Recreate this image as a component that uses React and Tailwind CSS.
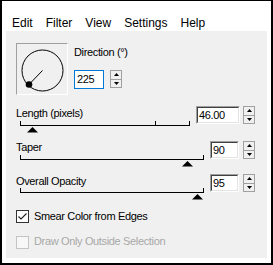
import React from 'react';

const font = { fontFamily: '"Liberation Sans", Arial, sans-serif' };

const Spin = () => (
  <div className="flex flex-col w-[12px] h-[18px] border border-[#a0a0a0] bg-[#f0f0f0]">
    <div className="flex-1 flex items-center justify-center border-b border-[#a0a0a0]">
      <svg width="5" height="3" viewBox="0 0 5 3"><polygon points="2.5,0 5,3 0,3" fill="#000" /></svg>
    </div>
    <div className="flex-1 flex items-center justify-center">
      <svg width="5" height="3" viewBox="0 0 5 3"><polygon points="0,0 5,0 2.5,3" fill="#000" /></svg>
    </div>
  </div>
);

const SunkenInput = ({ value, width }) => (
  <div className={`${width} h-[18px] border border-t-[#a0a0a0] border-l-[#a0a0a0] border-r-white border-b-white`}>
    <div className="h-full border border-t-[#404040] border-l-[#404040] border-r-[#e3e3e3] border-b-[#e3e3e3] bg-white flex items-center pl-[1px] text-[11px] leading-[13px]">
      {value}
    </div>
  </div>
);

const Track = ({ width, ticks, thumb }) => (
  <div className="relative h-[12px]" style={{ width }}>
    {ticks.map((t) => (
      <div key={t} className="absolute top-0 w-[1px] h-[4px] bg-black" style={{ left: t }} />
    ))}
    <div className="absolute top-[4px] left-0 right-0 h-[1px] bg-black" />
    <svg className="absolute top-[6px]" width="11" height="6" viewBox="0 0 11 6" style={{ left: thumb - 5 }}>
      <polygon points="5.5,0 11,5.5 0,5.5" fill="#000" />
    </svg>
  </div>
);

const Dial = () => (
  <div className="w-[52px] h-[52px] border border-t-[#a0a0a0] border-l-[#a0a0a0] border-r-white border-b-white">
    <svg width="50" height="50" viewBox="0 0 50 50">
      <circle cx="25.5" cy="26.5" r="20.5" fill="none" stroke="#000" strokeWidth="1" />
      <line x1="25.5" y1="26.5" x2="12" y2="40.5" stroke="#000" strokeWidth="1" />
      <circle cx="12" cy="40.5" r="3.3" fill="#000" />
    </svg>
  </div>
);

export default function App() {
  const menu = ['Edit', 'Filter', 'View', 'Settings', 'Help'];
  return (
    <div
      className="w-[273px] h-[265px] bg-white border-black border-t border-l-2 border-r-2 border-b-2 flex flex-col text-black"
      style={font}
    >
      <div className="h-[30px] shrink-0 pl-[10px] pt-[15px] flex gap-[13px] text-[12px] leading-[14px]">
        {menu.map((m) => (
          <span key={m}>{m}</span>
        ))}
      </div>

      <div className="mx-[4px] h-[227px] shrink-0 bg-[#f0f0f0] flex flex-col text-[11px] leading-[13px] tracking-[-0.35px]">
        <div className="flex mt-[12px] pl-[10px]">
          <Dial />
          <div className="ml-[6px] flex flex-col">
            <span className="mt-[3px]">Direction (°)</span>
            <div className="flex mt-[11px] gap-[6px]">
              <div className="w-[30px] h-[19px] border border-[#0078d7] bg-white flex items-center pl-[2px]">225</div>
              <Spin />
            </div>
          </div>
        </div>

        <div className="flex mt-[11px]">
          <div className="w-[190px] pl-[10px] flex flex-col">
            <span className="mt-[1px]">Length (pixels)</span>
            <div className="mt-[1px] ml-[4px]">
              <Track width={170} ticks={[0, 135, 169]} thumb={12} />
            </div>
          </div>
          <div className="flex gap-[3px]">
            <SunkenInput value="46.00" width="w-[44px]" />
            <Spin />
          </div>
        </div>

        <div className="flex mt-[8px]">
          <div className="w-[204px] pl-[10px] flex flex-col">
            <span>Taper</span>
            <div className="mt-[1px] ml-[4px]">
              <Track width={184} ticks={[0, 183]} thumb={167} />
            </div>
          </div>
          <div className="flex gap-[4px]">
            <SunkenInput value="90" width="w-[29px]" />
            <Spin />
          </div>
        </div>

        <div className="flex mt-[7px]">
          <div className="w-[204px] pl-[10px] flex flex-col">
            <span className="mt-[1px]">Overall Opacity</span>
            <div className="ml-[4px]">
              <Track width={184} ticks={[0, 183]} thumb={177} />
            </div>
          </div>
          <div className="flex gap-[4px]">
            <SunkenInput value="95" width="w-[29px]" />
            <Spin />
          </div>
        </div>

        <div className="flex items-start mt-[10px] pl-[10px] gap-[5px]">
          <div className="w-[13px] h-[13px] border border-[#333333] bg-white flex items-center justify-center">
            <svg width="11" height="11" viewBox="0 0 11 11">
              <polyline points="1.5,5.5 4,8 9.5,2.5" fill="none" stroke="#222" strokeWidth="1.1" />
            </svg>
          </div>
          <span>Smear Color from Edges</span>
        </div>

        <div className="flex items-start mt-[13px] pl-[10px] gap-[5px] text-[#a8a8a8]">
          <div className="w-[13px] h-[13px] border border-[#c4c4c4] bg-[#f7f7f7]" />
          <span className="-mt-[1px]">Draw Only Outside Selection</span>
        </div>
      </div>
    </div>
  );
}
